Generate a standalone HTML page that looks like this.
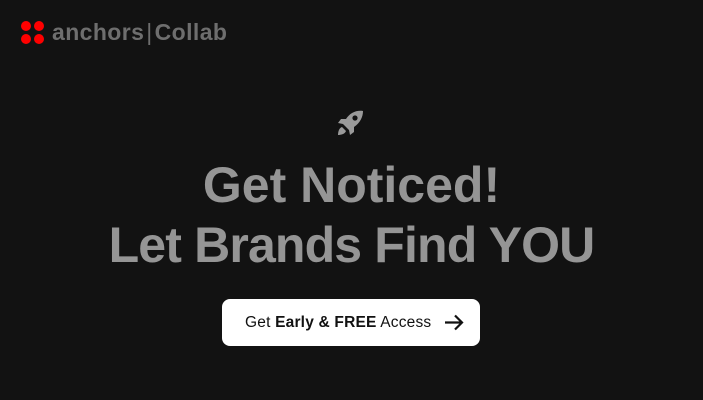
<!DOCTYPE html>
<html><head><style>
html,body{margin:0;padding:0;background:#121212;width:703px;height:400px;overflow:hidden;font-family:"Liberation Sans",sans-serif}
.logo{position:absolute;left:21px;top:21px}
.dot{position:absolute;width:10px;height:10px;border-radius:50%;background:#ff0000}
.lt{position:absolute;left:52px;top:19px;color:#6e6e6e;font-size:23px;font-weight:bold;letter-spacing:0.4px;white-space:nowrap}
.lt span{font-weight:normal;color:#6e6e6e;margin:0 2px}
h1{position:absolute;left:0;width:703px;top:155px;margin:0;text-align:center;color:#959595;font-size:50px;line-height:60px;font-weight:bold}
h1 span{letter-spacing:-0.85px}
.btn{position:absolute;left:222px;top:299px;width:258px;height:47px;background:#fff;border-radius:8px;color:#111;font-size:15.5px;letter-spacing:0.2px;line-height:47px}
.btn .t{position:absolute;left:23px}
.btn svg{position:absolute;left:222px;top:15px}
</style></head><body>
<div class="logo">
<div class="dot" style="left:0;top:0"></div><div class="dot" style="left:13px;top:0"></div>
<div class="dot" style="left:0;top:13px"></div><div class="dot" style="left:13px;top:13px"></div>
</div>
<div class="lt">anchors<span>|</span>Collab</div>
<svg style="position:absolute;left:337px;top:110px" width="27" height="26" viewBox="0 0 27 26">
<path d="M26 1 C19 0 13 3 9 9 L4 9 L1 13 L6 14 L12 20 L13 25 L17 22 L17 17 C23 13 26 7 26 1Z" fill="#9a9a9a"/>
<circle cx="18" cy="8" r="2.6" fill="#121212"/>
<path d="M5 17 C2 18 1 22 1 25 C4 25 8 24 9 21Z" fill="#9a9a9a"/>
</svg>
<h1>Get Noticed!<br><span>Let Brands Find YOU</span></h1>
<div class="btn"><span class="t">Get <b>Early &amp; FREE</b> Access</span>
<svg width="20" height="17" viewBox="0 0 20 17"><path d="M1 8.5H18M11 1.5L18 8.5L11 15.5" stroke="#111" stroke-width="2.2" fill="none"/></svg></div>
</body></html>
